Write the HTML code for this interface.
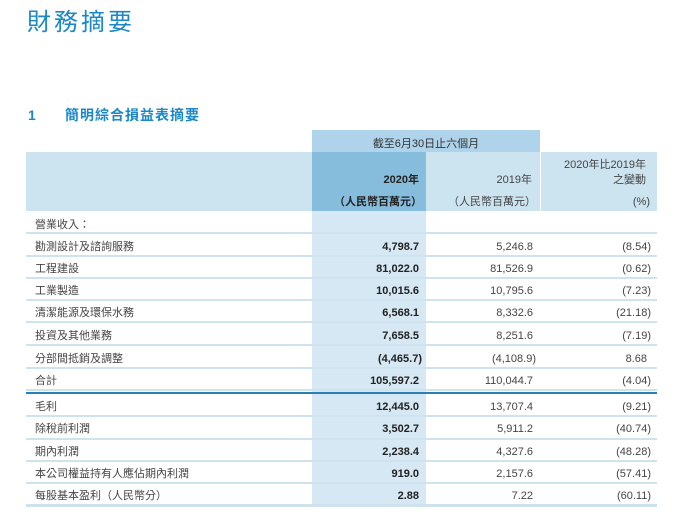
<!DOCTYPE html>
<html><head><meta charset="utf-8"><style>
*{margin:0;padding:0;box-sizing:border-box}
body{width:676px;height:519px;background:#fff;position:relative;overflow:hidden;font-family:"Liberation Sans Narrow","Liberation Sans","Noto Sans CJK TC",sans-serif;color:#444}
.a{position:absolute}
.t{font-size:11px;white-space:nowrap;line-height:14px}
.r{text-align:right}
.b{font-weight:bold;color:#222}
</style></head><body>
<div class="a" style="left:27px;top:8px;font-size:24px;letter-spacing:3px;color:#1a87c6;font-family:'Liberation Sans','Noto Sans CJK TC',sans-serif;line-height:30px">財務摘要</div>
<div class="a" style="left:28px;top:107px;font-size:14px;font-weight:bold;color:#1a87c6;line-height:16px">1</div>
<div class="a" style="left:65px;top:107px;font-size:14px;font-weight:bold;color:#1a87c6;letter-spacing:1px;line-height:16px;font-family:'Liberation Sans','Noto Sans CJK TC',sans-serif">簡明綜合損益表摘要</div>

<!-- header backgrounds -->
<div class="a" style="left:312px;top:130px;width:228px;height:22px;background:#aed3ea"></div>
<div class="a" style="left:26px;top:152px;width:631px;height:59px;background:#cce3f0"></div>
<div class="a" style="left:312px;top:152px;width:114px;height:59px;background:#86bddc"></div>
<div class="a" style="left:540px;top:152px;width:1px;height:59px;background:#fff"></div>
<div class="a" style="left:312px;top:211px;width:114px;height:294px;background:#d6e8f4"></div>

<div class="a t" style="left:312px;top:137px;width:228px;text-align:center;color:#333">截至6月30日止六個月</div>
<div class="a t r b" style="left:312px;top:173px;width:107px">2020年</div>
<div class="a t r b" style="left:312px;top:195px;width:110px">（人民幣百萬元）</div>
<div class="a t r" style="left:426px;top:173px;width:106px">2019年</div>
<div class="a t r" style="left:426px;top:195px;width:110px">（人民幣百萬元）</div>
<div class="a t r" style="left:541px;top:158px;width:105px">2020年比2019年</div>
<div class="a t r" style="left:541px;top:173px;width:105px">之變動</div>
<div class="a t r" style="left:541px;top:195px;width:109px">(%)</div>

<!-- lines -->
<div class="a" style="left:26px;top:232px;width:631px;height:2px;background:#cfe3ef"></div>
<div class="a" style="left:26px;top:255px;width:631px;height:2px;background:#cfe3ef"></div>
<div class="a" style="left:26px;top:277px;width:631px;height:2px;background:#cfe3ef"></div>
<div class="a" style="left:26px;top:299px;width:631px;height:2px;background:#cfe3ef"></div>
<div class="a" style="left:26px;top:321px;width:631px;height:2px;background:#cfe3ef"></div>
<div class="a" style="left:26px;top:344px;width:631px;height:2px;background:#cfe3ef"></div>
<div class="a" style="left:26px;top:367px;width:631px;height:2px;background:#cfe3ef"></div>
<div class="a" style="left:26px;top:389px;width:631px;height:2px;background:#cfe3ef"></div>
<div class="a" style="left:26px;top:392px;width:631px;height:2px;background:#2b7fb5"></div>
<div class="a" style="left:26px;top:415px;width:631px;height:2px;background:#cfe3ef"></div>
<div class="a" style="left:26px;top:438px;width:631px;height:2px;background:#cfe3ef"></div>
<div class="a" style="left:26px;top:460px;width:631px;height:2px;background:#cfe3ef"></div>
<div class="a" style="left:26px;top:482px;width:631px;height:2px;background:#cfe3ef"></div>
<div class="a" style="left:26px;top:504px;width:631px;height:3px;background:#cfe3ef"></div>

<div class="a t" style="left:35px;top:218px">營業收入：</div>

<div class="a t" style="left:35px;top:240px">勘測設計及諮詢服務</div>
<div class="a t r b" style="left:312px;top:240px;width:107px">4,798.7</div>
<div class="a t r" style="left:426px;top:240px;width:107px">5,246.8</div>
<div class="a t r" style="left:541px;top:240px;width:110px">(8.54)</div>

<div class="a t" style="left:35px;top:262px">工程建設</div>
<div class="a t r b" style="left:312px;top:262px;width:107px">81,022.0</div>
<div class="a t r" style="left:426px;top:262px;width:107px">81,526.9</div>
<div class="a t r" style="left:541px;top:262px;width:110px">(0.62)</div>

<div class="a t" style="left:35px;top:284px">工業製造</div>
<div class="a t r b" style="left:312px;top:284px;width:107px">10,015.6</div>
<div class="a t r" style="left:426px;top:284px;width:107px">10,795.6</div>
<div class="a t r" style="left:541px;top:284px;width:110px">(7.23)</div>

<div class="a t" style="left:35px;top:306px">清潔能源及環保水務</div>
<div class="a t r b" style="left:312px;top:306px;width:107px">6,568.1</div>
<div class="a t r" style="left:426px;top:306px;width:107px">8,332.6</div>
<div class="a t r" style="left:541px;top:306px;width:110px">(21.18)</div>

<div class="a t" style="left:35px;top:329px">投資及其他業務</div>
<div class="a t r b" style="left:312px;top:329px;width:107px">7,658.5</div>
<div class="a t r" style="left:426px;top:329px;width:107px">8,251.6</div>
<div class="a t r" style="left:541px;top:329px;width:110px">(7.19)</div>

<div class="a t" style="left:35px;top:352px">分部間抵銷及調整</div>
<div class="a t r b" style="left:312px;top:352px;width:110px">(4,465.7)</div>
<div class="a t r" style="left:426px;top:352px;width:110px">(4,108.9)</div>
<div class="a t r" style="left:541px;top:352px;width:106px">8.68</div>

<div class="a t" style="left:35px;top:374px">合計</div>
<div class="a t r b" style="left:312px;top:374px;width:107px">105,597.2</div>
<div class="a t r" style="left:426px;top:374px;width:107px">110,044.7</div>
<div class="a t r" style="left:541px;top:374px;width:110px">(4.04)</div>

<div class="a t" style="left:35px;top:400px">毛利</div>
<div class="a t r b" style="left:312px;top:400px;width:107px">12,445.0</div>
<div class="a t r" style="left:426px;top:400px;width:107px">13,707.4</div>
<div class="a t r" style="left:541px;top:400px;width:110px">(9.21)</div>

<div class="a t" style="left:35px;top:422px">除稅前利潤</div>
<div class="a t r b" style="left:312px;top:422px;width:107px">3,502.7</div>
<div class="a t r" style="left:426px;top:422px;width:107px">5,911.2</div>
<div class="a t r" style="left:541px;top:422px;width:110px">(40.74)</div>

<div class="a t" style="left:35px;top:445px">期內利潤</div>
<div class="a t r b" style="left:312px;top:445px;width:107px">2,238.4</div>
<div class="a t r" style="left:426px;top:445px;width:107px">4,327.6</div>
<div class="a t r" style="left:541px;top:445px;width:110px">(48.28)</div>

<div class="a t" style="left:35px;top:467px">本公司權益持有人應佔期內利潤</div>
<div class="a t r b" style="left:312px;top:467px;width:107px">919.0</div>
<div class="a t r" style="left:426px;top:467px;width:107px">2,157.6</div>
<div class="a t r" style="left:541px;top:467px;width:110px">(57.41)</div>

<div class="a t" style="left:35px;top:489px">每股基本盈利（人民幣分）</div>
<div class="a t r b" style="left:312px;top:489px;width:107px">2.88</div>
<div class="a t r" style="left:426px;top:489px;width:107px">7.22</div>
<div class="a t r" style="left:541px;top:489px;width:110px">(60.11)</div>
</body></html>
